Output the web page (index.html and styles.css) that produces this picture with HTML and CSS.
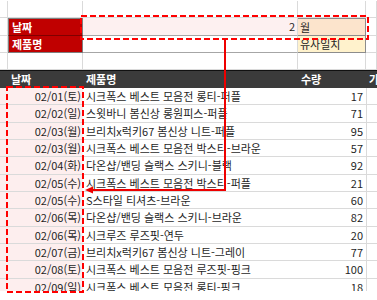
FILE: index.html
```html
<!DOCTYPE html>
<html lang="ko">
<head>
<meta charset="utf-8">
<link rel="stylesheet" href="styles.css">
</head>
<body>
<div class="page">
  <div class="sheet">
    <!-- row 1 -->
    <div class="c"></div><div class="c"></div><div class="c"></div><div class="c"></div><div class="c"></div>
    <!-- row 2 -->
    <div class="c"></div>
    <div class="c lbl lbl-top">날짜</div>
    <div class="c val pink num">2</div>
    <div class="c unit peach">월</div>
    <div class="c"></div>
    <!-- row 3 -->
    <div class="c"></div>
    <div class="c lbl lbl-bot">제품명</div>
    <div class="c val white"></div>
    <div class="c unit yellow">유사일치</div>
    <div class="c"></div>
    <!-- row 4 -->
    <div class="c"></div><div class="c"></div><div class="c"></div><div class="c"></div><div class="c"></div>
    <!-- header -->
    <div class="c hd"></div>
    <div class="c hd">날짜</div>
    <div class="c hd">제품명</div>
    <div class="c hd">수량</div>
    <div class="c hd">가</div>
  </div>
  <div class="table">
    <div class="tr"><div class="td a"></div><div class="td date">02/01(토)</div><div class="td prod">시크폭스 베스트 모음전 롱티-퍼플</div><div class="td qty">17</div><div class="td e"></div></div>
    <div class="tr"><div class="td a"></div><div class="td date">02/02(일)</div><div class="td prod">스윗바니 봄신상 롱원피스-퍼플</div><div class="td qty">71</div><div class="td e"></div></div>
    <div class="tr"><div class="td a"></div><div class="td date">02/03(월)</div><div class="td prod">브리치x럭키67 봄신상 니트-퍼플</div><div class="td qty">95</div><div class="td e"></div></div>
    <div class="tr"><div class="td a"></div><div class="td date">02/03(월)</div><div class="td prod">시크폭스 베스트 모음전 박스티-브라운</div><div class="td qty">57</div><div class="td e"></div></div>
    <div class="tr"><div class="td a"></div><div class="td date">02/04(화)</div><div class="td prod">다온샵/밴딩 슬랙스 스키니-블랙</div><div class="td qty">92</div><div class="td e"></div></div>
    <div class="tr"><div class="td a"></div><div class="td date">02/05(수)</div><div class="td prod">시크폭스 베스트 모음전 박스티-퍼플</div><div class="td qty">21</div><div class="td e"></div></div>
    <div class="tr"><div class="td a"></div><div class="td date">02/05(수)</div><div class="td prod">S스타일 티셔츠-브라운</div><div class="td qty">60</div><div class="td e"></div></div>
    <div class="tr"><div class="td a"></div><div class="td date">02/06(목)</div><div class="td prod">다온샵/밴딩 슬랙스 스키니-브라운</div><div class="td qty">82</div><div class="td e"></div></div>
    <div class="tr"><div class="td a"></div><div class="td date">02/06(목)</div><div class="td prod">시크루즈 루즈핏-연두</div><div class="td qty">20</div><div class="td e"></div></div>
    <div class="tr"><div class="td a"></div><div class="td date">02/07(금)</div><div class="td prod">브리치x럭키67 봄신상 니트-그레이</div><div class="td qty">77</div><div class="td e"></div></div>
    <div class="tr"><div class="td a"></div><div class="td date">02/08(토)</div><div class="td prod">시크폭스 베스트 모음전 루즈핏-핑크</div><div class="td qty">100</div><div class="td e"></div></div>
    <div class="tr"><div class="td a"></div><div class="td date">02/09(일)</div><div class="td prod">시크폭스 베스트 모음전 롱티-핑크</div><div class="td qty">18</div><div class="td e"></div></div>
  </div>
  <svg class="overlay" width="377" height="300" viewBox="0 0 377 300" xmlns="http://www.w3.org/2000/svg">
    <rect x="81" y="16" width="287" height="23" fill="none" stroke="#ff0000" stroke-width="2" stroke-dasharray="6 3"/>
    <rect x="7" y="87" width="76" height="205" fill="none" stroke="#ff0000" stroke-width="2" stroke-dasharray="6 3"/>
    <polyline points="225,39 225,190 92,190" fill="none" stroke="#ee0000" stroke-width="2"/>
    <polygon points="85,190 93,186.5 93,193.5" fill="#ee0000"/>
  </svg>
</div>
</body>
</html>
```
FILE: styles.css
```css
* { box-sizing: border-box; }
html, body { margin: 0; padding: 0; background: #ffffff; }
body {
  font-family: "Noto Sans CJK KR", "Noto Sans", sans-serif;
  font-size: 11px;
  color: #1f1f1f;
}
.page {
  position: relative;
  width: 377px;
  height: 300px;
  overflow: hidden;
  padding-top: 1px;
}
.sheet {
  display: grid;
  grid-template-columns: 8px 75px 215px 68px 11px;
  grid-auto-rows: 17.36px;
}
.c {
  border-right: 1px solid #dadada;
  border-bottom: 1px solid #dadada;
  line-height: 16px;
  white-space: nowrap;
  overflow: hidden;
  padding: 0 2px;
}
.lbl {
  background: #c00000;
  color: #ffffff;
  font-weight: bold;
  padding-left: 3px;
  border-left: 1px solid #7f7f7f;
  border-right: 1px solid #7f7f7f;
}
.lbl-top { border-top: 1px solid #7f7f7f; border-bottom: 1px solid #800000; }
.lbl-bot { border-bottom: 1px solid #7f7f7f; }
.val { border-bottom: 1px solid #a6a6a6; }
.pink { background: #fdf0f0; }
.white { background: #ffffff; }
.num { text-align: right; }
.unit { border-right: 1px solid #8c8c8c; border-bottom: 1px solid #8c8c8c; }
.peach { background: #fce4cc; border-top: 1px solid #8c8c8c; }
.yellow { background: #fff2cc; }
.hd {
  background: #3b3b3b;
  color: #ffffff;
  font-weight: bold;
  border-top: 1px solid #111111;
  border-right: none;
  border-bottom: none;
  padding-left: 3px;
}
.table {
  display: flex;
  flex-direction: column;
  height: 203px;
  overflow: hidden;
}
.tr {
  display: grid;
  grid-template-columns: 8px 75px 215px 68px 11px;
  height: 17.36px;
  flex: none;
}
.td {
  border-bottom: 1px solid #dadada;
  line-height: 16px;
  white-space: nowrap;
  overflow: hidden;
  padding: 0 2px;
}
.a { background: #fdeeee; }
.date { background: #fdeeee; text-align: right; }
.prod { padding-left: 3px; }
.qty { text-align: right; padding-right: 3px; }
.e { border-left: 1px solid #dadada; }
.overlay {
  position: absolute;
  left: 0;
  top: 0;
}
```
